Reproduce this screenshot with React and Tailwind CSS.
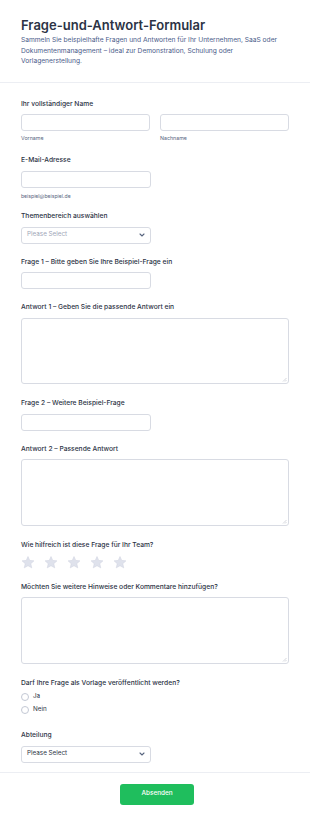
import React from 'react'

const font = { fontFamily: 'Inter, "Noto Sans", sans-serif' }

const Label = ({ children }) => (
  <label className="block h-[9px] text-[6.7px] leading-[9px] font-medium text-[#2c3345]">
    {children}
  </label>
)

const Input = ({ className = '' }) => (
  <div className={`h-[17px] rounded-[3px] border border-[#d8dbe3] bg-white ${className}`} />
)

const Select = ({ dark }) => (
  <div className="flex h-[17px] w-[130px] items-center justify-between rounded-[3px] border border-[#d8dbe3] bg-white pl-[5px] pr-[5px]">
    <span className={`text-[6.3px] ${dark ? 'text-[#2c3345]' : 'text-[#a0a6b8]'}`}>Please Select</span>
    <svg width="6" height="4" viewBox="0 0 6 4" fill="none">
      <path d="M1 1l2 2 2-2" stroke="#57647e" strokeWidth="1.1" strokeLinecap="round" />
    </svg>
  </div>
)

const TextArea = ({ h }) => (
  <div className={`relative ${h} w-full rounded-[3px] border border-[#d8dbe3] bg-white`}>
    <svg className="absolute bottom-[1px] right-[1px]" width="5" height="5" viewBox="0 0 5 5">
      <path d="M4.5 1L1 4.5M4.5 3L3 4.5" stroke="#b8bcc8" strokeWidth="0.6" />
    </svg>
  </div>
)

const Star = () => (
  <svg width="14" height="13" viewBox="0 0 24 23">
    <path
      d="M12 1l3.1 6.9 7.4.7-5.6 5 1.7 7.4L12 17.2 5.4 21l1.7-7.4-5.6-5 7.4-.7z"
      fill="#dfe2ec"
      stroke="#d0d4e0"
      strokeWidth="1"
      strokeLinejoin="round"
    />
  </svg>
)

const Radio = ({ children }) => (
  <div className="flex h-[13px] items-center gap-[4px]">
    <span className="h-[8px] w-[8px] rounded-full border border-[#c3c8d4] bg-white" />
    <span className="text-[6.3px] text-[#2c3345]">{children}</span>
  </div>
)

export default function App() {
  return (
    <div className="min-h-[821px] w-[310px] bg-white" style={font}>
      {/* Kopfbereich */}
      <div className="px-[21px] pb-[15px] pt-[17px]">
        <h1 className="text-[13px] leading-[16px] font-semibold text-[#2c3345]">
          Frage-und-Antwort-Formular
        </h1>
        <p className="mt-[2px] text-[6.65px] leading-[10.5px] text-[#4b5c8a]">
          Sammeln Sie beispielhafte Fragen und Antworten für Ihr Unternehmen, SaaS oder
          Dokumentenmanagement – ideal zur Demonstration, Schulung oder Vorlagenerstellung.
        </p>
      </div>
      <div className="h-px bg-[#eceef3]" />

      <div className="px-[21px] pb-[9px] pt-[17px]">
        <div className="mb-[14px]">
          <Label>Ihr vollständiger Name</Label>
          <div className="mt-[5px] flex gap-[10px]">
            <div className="flex-1">
              <Input />
              <div className="mt-[4px] text-[5.3px] leading-[7px] text-[#57647e]">Vorname</div>
            </div>
            <div className="flex-1">
              <Input />
              <div className="mt-[4px] text-[5.3px] leading-[7px] text-[#57647e]">Nachname</div>
            </div>
          </div>
        </div>

        <div className="mb-[12px]">
          <Label>E-Mail-Adresse</Label>
          <Input className="mt-[6px] w-[130px]" />
          <div className="mt-[5px] text-[5.1px] leading-[7px] text-[#57647e]">beispiel@beispiel.de</div>
        </div>

        <div className="mb-[14px]">
          <Label>Themenbereich auswählen</Label>
          <div className="mt-[6px]">
            <Select />
          </div>
        </div>

        <div className="mb-[14px]">
          <Label>Frage 1 – Bitte geben Sie Ihre Beispiel-Frage ein</Label>
          <Input className="mt-[5px] w-[130px]" />
        </div>

        <div className="mb-[15px]">
          <Label>Antwort 1 – Geben Sie die passende Antwort ein</Label>
          <div className="mt-[6px]">
            <TextArea h="h-[66px]" />
          </div>
        </div>

        <div className="mb-[14px]">
          <Label>Frage 2 – Weitere Beispiel-Frage</Label>
          <Input className="mt-[6px] w-[130px]" />
        </div>

        <div className="mb-[15px]">
          <Label>Antwort 2 – Passende Antwort</Label>
          <div className="mt-[5px]">
            <TextArea h="h-[67px]" />
          </div>
        </div>

        <div className="mb-[14px]">
          <Label>Wie hilfreich ist diese Frage für Ihr Team?</Label>
          <div className="mt-[6px] flex h-[13px] gap-[9px]">
            <Star />
            <Star />
            <Star />
            <Star />
            <Star />
          </div>
        </div>

        <div className="mb-[15px]">
          <Label>Möchten Sie weitere Hinweise oder Kommentare hinzufügen?</Label>
          <div className="mt-[5px]">
            <TextArea h="h-[67px]" />
          </div>
        </div>

        <div className="mb-[14px]">
          <Label>Darf Ihre Frage als Vorlage veröffentlicht werden?</Label>
          <div className="mt-[3px]">
            <Radio>Ja</Radio>
            <Radio>Nein</Radio>
          </div>
        </div>

        <div>
          <Label>Abteilung</Label>
          <div className="mt-[6px]">
            <Select dark />
          </div>
        </div>
      </div>
      <div className="h-px bg-[#eceef3]" />

      <div className="flex justify-center pl-[4px] pt-[11px]">
        <button className="h-[21px] w-[74px] rounded-[3px] bg-[#1fbe5d] text-[6.4px] font-medium text-white">
          Absenden
        </button>
      </div>
    </div>
  )
}
